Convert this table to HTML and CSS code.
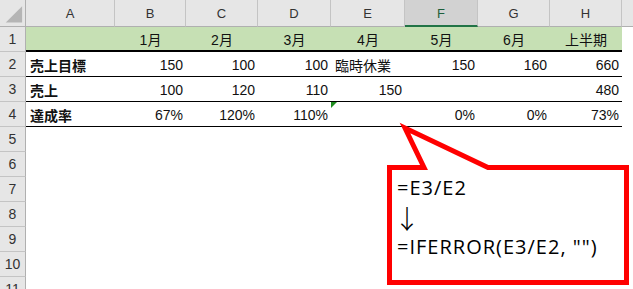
FILE: index.html
```html
<!DOCTYPE html>
<html lang="ja">
<head>
<meta charset="utf-8">
<title>IFERROR</title>
<link rel="stylesheet" href="styles.css">
</head>
<body>
<div class="sheet">
  <div class="row head">
    <div class="corner"><svg width="26" height="26" viewBox="0 0 26 26"><polygon points="23,6 23,23 6,23" fill="#b5b5b5"/></svg></div>
    <div class="ch">A</div>
    <div class="ch">B</div>
    <div class="ch">C</div>
    <div class="ch">D</div>
    <div class="ch">E</div>
    <div class="ch sel">F</div>
    <div class="ch">G</div>
    <div class="ch">H</div>
    <div class="ch rest"></div>
  </div>

  <div class="row">
    <div class="rh">1</div>
    <div class="c g"></div>
    <div class="c g ctr">1月</div>
    <div class="c g ctr">2月</div>
    <div class="c g ctr">3月</div>
    <div class="c g ctr">4月</div>
    <div class="c g ctr">5月</div>
    <div class="c g ctr">6月</div>
    <div class="c g ctr">上半期</div>
    <div class="rest"></div>
  </div>

  <div class="row">
    <div class="rh">2</div>
    <div class="c b">売上目標</div>
    <div class="c n">150</div>
    <div class="c n">100</div>
    <div class="c n">100</div>
    <div class="c">臨時休業</div>
    <div class="c n">150</div>
    <div class="c n">160</div>
    <div class="c n">660</div>
    <div class="rest"></div>
  </div>

  <div class="row">
    <div class="rh">3</div>
    <div class="c b">売上</div>
    <div class="c n">100</div>
    <div class="c n">120</div>
    <div class="c n">110</div>
    <div class="c n">150</div>
    <div class="c n"></div>
    <div class="c n"></div>
    <div class="c n">480</div>
    <div class="rest"></div>
  </div>

  <div class="row">
    <div class="rh">4</div>
    <div class="c b">達成率</div>
    <div class="c n">67%</div>
    <div class="c n">120%</div>
    <div class="c n">110%</div>
    <div class="c n err"></div>
    <div class="c n">0%</div>
    <div class="c n">0%</div>
    <div class="c n">73%</div>
    <div class="rest"></div>
  </div>

  <div class="row blank"><div class="rh">5</div></div>
  <div class="row blank"><div class="rh">6</div></div>
  <div class="row blank"><div class="rh">7</div></div>
  <div class="row blank"><div class="rh">8</div></div>
  <div class="row blank"><div class="rh">9</div></div>
  <div class="row blank"><div class="rh">10</div></div>
  <div class="row blank"><div class="rh">11</div></div>
</div>

<svg class="callout-shape" width="633" height="289" viewBox="0 0 633 289">
  <path d="M424 167.5 L405 128 L488 167.5 H626.5 V282.5 H389.5 V167.5 Z" fill="#fff" stroke="#ff0000" stroke-width="5" stroke-linejoin="miter"/>
</svg>
<div class="callout-text">
  <div>=E3/E2</div>
  <div class="arrow">↓</div>
  <div>=IFERROR(E3/E2, "")</div>
</div>
</body>
</html>
```
FILE: styles.css
```css
html, body {
  margin: 0;
  padding: 0;
  background: #fff;
}
body {
  width: 633px;
  height: 289px;
  overflow: hidden;
  position: relative;
  font-family: "Liberation Sans", "Noto Sans CJK JP", sans-serif;
  color: #111;
}
.sheet {
  display: flex;
  flex-direction: column;
}
.row {
  display: grid;
  grid-template-columns: 26px 89px 71px 72px 73px 74px 73px 72px 72px 1fr;
  height: 25px;
}
.row.head {
  height: 27px;
}
.corner {
  background: #e6e6e6;
  border-right: 1px solid #b0b0b0;
  border-bottom: 1px solid #b0b0b0;
  box-sizing: border-box;
  display: flex;
}
.ch {
  background: #e6e6e6;
  border-right: 1px solid #c4c4c4;
  border-bottom: 1px solid #b0b0b0;
  box-sizing: border-box;
  display: flex;
  align-items: center;
  justify-content: center;
  font-size: 13px;
  color: #333;
  padding-top: 1px;
}
.ch.sel {
  background: #d2d2d2;
  border-bottom: 2px solid #217346;
  color: #1d5f3b;
}
.ch.rest {
  border-right: none;
}
.rh {
  background: #e6e6e6;
  border-right: 1px solid #b0b0b0;
  border-bottom: 1px solid #c4c4c4;
  box-sizing: border-box;
  display: flex;
  align-items: center;
  justify-content: center;
  font-size: 14px;
  color: #333;
}
.c {
  box-sizing: border-box;
  border-bottom: 1px solid #000;
  display: flex;
  align-items: center;
  padding: 1px 4px 0 4px;
  font-size: 14px;
  white-space: nowrap;
  position: relative;
}
.c.g {
  background: #c6e0b4;
  border-bottom: 2px solid #000;
}
.c.ctr {
  justify-content: center;
}
.c.n {
  justify-content: flex-end;
  padding-right: 3px;
}
.c.b {
  font-weight: bold;
}
.c.err::before {
  content: "";
  position: absolute;
  left: 0;
  top: 0;
  border-top: 6px solid #1e8c1e;
  border-right: 6px solid transparent;
}
.callout-shape {
  position: absolute;
  left: 0;
  top: 0;
  pointer-events: none;
}
.callout-text {
  position: absolute;
  left: 397px;
  top: 173px;
  font-family: "Open Sans", "Liberation Sans", sans-serif;
  font-size: 20px;
  letter-spacing: 1px;
  line-height: 29.5px;
  color: #000;
  white-space: nowrap;
}
.callout-text .arrow {
  font-family: "Noto Sans CJK JP", sans-serif;
  font-size: 26px;
  font-weight: 300;
  letter-spacing: 0;
  margin-left: -3px;
}
```
